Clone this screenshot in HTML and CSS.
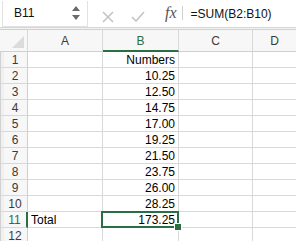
FILE: index.html
```html
<!DOCTYPE html>
<html>
<head>
<meta charset="utf-8">
<link rel="stylesheet" href="styles.css">
</head>
<body>
<div class="fbar">
  <div class="namebox">
    <span class="nb-text">B11</span>
    <span class="spin">
      <svg width="8" height="14" viewBox="0 0 8 14"><path d="M4 0 L8 5 L0 5 Z" fill="#6b6b6b"/><path d="M0 9 L8 9 L4 14 Z" fill="#6b6b6b"/></svg>
    </span>
  </div>
  <div class="ficons">
    <svg class="ic-x" width="12" height="12" viewBox="0 0 12 12"><path d="M1 1 L11 11 M11 1 L1 11" stroke="#c4c4c4" stroke-width="1.6" fill="none"/></svg>
    <svg class="ic-ok" width="14" height="11" viewBox="0 0 14 11"><path d="M1 6 L5 10 L13 1" stroke="#c4c4c4" stroke-width="1.6" fill="none"/></svg>
    <span class="fx">fx</span>
    <span class="sep"></span>
  </div>
  <div class="formula">=SUM(B2:B10)</div>
</div>
<div class="gap"></div>
<div class="sheet">
  <div class="hd corner"><span class="tri"></span></div>
  <div class="hd col">A</div>
  <div class="hd col sel">B</div>
  <div class="hd col">C</div>
  <div class="hd col last">D</div>

  <div class="rh">1</div><div class="c"></div><div class="c num">Numbers</div><div class="c"></div><div class="c last"></div>
  <div class="rh">2</div><div class="c"></div><div class="c num">10.25</div><div class="c"></div><div class="c last"></div>
  <div class="rh">3</div><div class="c"></div><div class="c num">12.50</div><div class="c"></div><div class="c last"></div>
  <div class="rh">4</div><div class="c"></div><div class="c num">14.75</div><div class="c"></div><div class="c last"></div>
  <div class="rh">5</div><div class="c"></div><div class="c num">17.00</div><div class="c"></div><div class="c last"></div>
  <div class="rh">6</div><div class="c"></div><div class="c num">19.25</div><div class="c"></div><div class="c last"></div>
  <div class="rh">7</div><div class="c"></div><div class="c num">21.50</div><div class="c"></div><div class="c last"></div>
  <div class="rh">8</div><div class="c"></div><div class="c num">23.75</div><div class="c"></div><div class="c last"></div>
  <div class="rh">9</div><div class="c"></div><div class="c num">26.00</div><div class="c"></div><div class="c last"></div>
  <div class="rh">10</div><div class="c"></div><div class="c num">28.25</div><div class="c"></div><div class="c last"></div>
  <div class="rh selrow">11</div><div class="c txt">Total</div><div class="c num active">173.25<span class="handle"></span></div><div class="c"></div><div class="c last"></div>
  <div class="rh">12</div><div class="c"></div><div class="c"></div><div class="c"></div><div class="c last"></div>
</div>
</body>
</html>
```
FILE: styles.css
```css
* { box-sizing: border-box; }
html, body { margin: 0; padding: 0; }
body {
  width: 296px;
  height: 241px;
  overflow: hidden;
  background: #ffffff;
  font-family: "Liberation Sans", Arial, sans-serif;
  font-size: 12px;
  color: #000;
}
.fbar {
  height: 28px;
  display: flex;
  align-items: center;
  background: #ffffff;
  border-bottom: 1px solid #d6d6d6;
}
.namebox {
  margin-left: 2px;
  width: 86px;
  height: 26px;
  background: #fff;
  border: 1px solid #e2e2e2;
  border-top: none;
  display: flex;
  align-items: center;
  justify-content: space-between;
  padding: 0 7px 0 11px;
}
.nb-text { font-size: 12px; color: #111; }
.spin { display: flex; align-items: center; }
.ficons {
  display: flex;
  align-items: center;
  height: 100%;
  padding-left: 14px;
}
.ic-x { margin-top: 6px; }
.ic-ok { margin-left: 17px; margin-top: 6px; }
.fx {
  margin-left: 20px;
  font-family: "Liberation Serif", "DejaVu Serif", serif;
  font-style: italic;
  font-size: 16px;
  color: #555;
  margin-top: -2px;
}
.sep {
  width: 1px;
  height: 14px;
  background: #d0d0d0;
  margin-left: 5px;
  margin-top: -2px;
}
.formula {
  margin-left: 8px;
  font-size: 12px;
  color: #111;
}
.gap { height: 1px; background: #f2f2f2; }
.sheet {
  display: grid;
  grid-template-columns: 28px 75px 76px 74px 1fr;
  grid-template-rows: 23px;
  grid-auto-rows: 16px;
}
.hd {
  background: #f7f7f7;
  border-top: 1px solid #d0d0d0;
  border-bottom: 1px solid #cfcfcf;
  border-right: 1px solid #d8d8d8;
  display: flex;
  align-items: center;
  justify-content: center;
  font-size: 12px;
  color: #3a3a3a;
  padding-top: 1px;
}
.hd.last { border-right: none; }
.hd.sel {
  color: #2a6e43;
  border-bottom: 2px solid #2a6e43;
}
.corner { position: relative; border-left: none; }
.tri {
  position: absolute;
  right: 3px;
  bottom: 3px;
  width: 0; height: 0;
  border-left: 12px solid transparent;
  border-bottom: 12px solid #dcdcdc;
}
.rh {
  background: #f7f7f7;
  border-left: 1px solid #d0d0d0;
  margin-left: 0;
  border-right: 1px solid #cfcfcf;
  border-bottom: 1px solid #d8d8d8;
  display: flex;
  align-items: center;
  justify-content: center;
  font-size: 12px;
  color: #3a3a3a;
  padding-left: 2px;
  box-shadow: inset 3px 0 0 #f0f0f0;
}
.rh.selrow {
  color: #2a6e43;
  border-right: 2px solid #2a6e43;
}
.c {
  border-right: 1px solid #d8d8d8;
  border-bottom: 1px solid #d8d8d8;
  display: flex;
  align-items: center;
  font-size: 12px;
  color: #000;
  padding: 1px 3px 0 3px;
}
.c.last { border-right: none; }
.num { justify-content: flex-end; }
.txt { justify-content: flex-start; }
.active {
  position: relative;
  overflow: visible;
}
.active::before {
  content: "";
  position: absolute;
  left: -2px; top: -1px; right: -1px; bottom: -1px;
  border: 2px solid #2a6e43;
  pointer-events: none;
}
.handle {
  position: absolute;
  right: -4px;
  bottom: -4px;
  width: 6px;
  height: 6px;
  background: #2a6e43;
  border: 1px solid #fff;
  box-sizing: content-box;
  z-index: 2;
}
```
